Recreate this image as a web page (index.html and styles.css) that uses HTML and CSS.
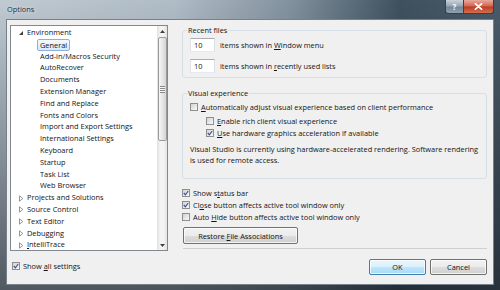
FILE: index.html
```html
<!DOCTYPE html>
<html>
<head>
<meta charset="utf-8">
<title>Options</title>
<link rel="stylesheet" href="styles.css">
</head>
<body>
<div class="window">
  <div class="titlebar">
    <span class="title">Options</span>
    <div class="caption">
      <span class="cap-btn help">?</span>
      <span class="cap-btn close"><svg width="9" height="7" viewBox="0 0 9 7"><path d="M1.5 0.8 L7.5 6.2 M7.5 0.8 L1.5 6.2" stroke="#fff" stroke-width="1.8" stroke-linecap="round"/></svg></span>
    </div>
  </div>
  <div class="client">
    <div class="left">
      <div class="tree">
        <ul class="tree-list">
          <li class="node"><svg class="arrow" width="6" height="6" viewBox="0 0 6 6"><polygon points="5,1 5,5 1,5" fill="#404040"/></svg>Environment</li>
          <li class="child"><span class="sel">General</span></li>
          <li class="child"><span class="item">Add-in/Macros Security</span></li>
          <li class="child"><span class="item">AutoRecover</span></li>
          <li class="child"><span class="item">Documents</span></li>
          <li class="child"><span class="item">Extension Manager</span></li>
          <li class="child"><span class="item">Find and Replace</span></li>
          <li class="child"><span class="item">Fonts and Colors</span></li>
          <li class="child"><span class="item">Import and Export Settings</span></li>
          <li class="child"><span class="item">International Settings</span></li>
          <li class="child"><span class="item">Keyboard</span></li>
          <li class="child"><span class="item">Startup</span></li>
          <li class="child"><span class="item">Task List</span></li>
          <li class="child"><span class="item">Web Browser</span></li>
          <li class="node"><svg class="arrow" width="6" height="7" viewBox="0 0 6 7"><polygon points="1.5,0.8 4.8,3.5 1.5,6.2" fill="none" stroke="#8a8a8a" stroke-width="0.9"/></svg>Projects and Solutions</li>
          <li class="node"><svg class="arrow" width="6" height="7" viewBox="0 0 6 7"><polygon points="1.5,0.8 4.8,3.5 1.5,6.2" fill="none" stroke="#8a8a8a" stroke-width="0.9"/></svg>Source Control</li>
          <li class="node"><svg class="arrow" width="6" height="7" viewBox="0 0 6 7"><polygon points="1.5,0.8 4.8,3.5 1.5,6.2" fill="none" stroke="#8a8a8a" stroke-width="0.9"/></svg>Text Editor</li>
          <li class="node"><svg class="arrow" width="6" height="7" viewBox="0 0 6 7"><polygon points="1.5,0.8 4.8,3.5 1.5,6.2" fill="none" stroke="#8a8a8a" stroke-width="0.9"/></svg>Debugging</li>
          <li class="node"><svg class="arrow" width="6" height="7" viewBox="0 0 6 7"><polygon points="1.5,0.8 4.8,3.5 1.5,6.2" fill="none" stroke="#8a8a8a" stroke-width="0.9"/></svg><u>I</u>ntelliTrace</li>
        </ul>
        <div class="vscroll">
          <div class="sb-btn"><svg width="5" height="3" viewBox="0 0 5 3"><polygon points="0,3 2.5,0 5,3" fill="#404040"/></svg></div>
          <div class="sb-track"><div class="thumb"><span class="grip"></span></div></div>
          <div class="sb-btn"><svg width="5" height="3" viewBox="0 0 5 3"><polygon points="0,0 5,0 2.5,3" fill="#404040"/></svg></div>
        </div>
      </div>
      <div class="chk show-all"><span class="cb"><svg viewBox="0 0 6 6"><path d="M0.8 3 L2.4 4.8 L5.2 1" fill="none" stroke="#3d5593" stroke-width="1.2"/></svg></span><span>Show <u>a</u>ll settings</span></div>
    </div>
    <div class="right">
      <fieldset class="group recent">
        <legend>Recent files</legend>
        <div class="num-row"><span class="textbox">10</span><span>items shown in <u>W</u>indow menu</span></div>
        <div class="num-row second"><span class="textbox">10</span><span>items shown in <u>r</u>ecently used lists</span></div>
      </fieldset>
      <fieldset class="group visual">
        <legend>Visual experience</legend>
        <div class="chk first"><span class="cb"></span><span><u>A</u>utomatically adjust visual experience based on client performance</span></div>
        <div class="chk nested"><span class="cb"></span><span><u>E</u>nable rich client visual experience</span></div>
        <div class="chk nested"><span class="cb"><svg viewBox="0 0 6 6"><path d="M0.8 3 L2.4 4.8 L5.2 1" fill="none" stroke="#3d5593" stroke-width="1.2"/></svg></span><span><u>U</u>se hardware graphics acceleration if available</span></div>
        <p class="note">Visual Studio is currently using hardware-accelerated rendering. Software rendering<br>is used for remote access.</p>
      </fieldset>
      <div class="options">
        <div class="chk"><span class="cb"><svg viewBox="0 0 6 6"><path d="M0.8 3 L2.4 4.8 L5.2 1" fill="none" stroke="#3d5593" stroke-width="1.2"/></svg></span><span>Show s<u>t</u>atus bar</span></div>
        <div class="chk"><span class="cb"><svg viewBox="0 0 6 6"><path d="M0.8 3 L2.4 4.8 L5.2 1" fill="none" stroke="#3d5593" stroke-width="1.2"/></svg></span><span>Cl<u>o</u>se button affects active tool window only</span></div>
        <div class="chk"><span class="cb"></span><span>Auto <u>H</u>ide button affects active tool window only</span></div>
      </div>
      <button class="btn restore">Restore <u>F</u>ile Associations</button>
      <div class="separator"></div>
      <div class="dialog-btns">
        <button class="btn default">OK</button>
        <button class="btn">Cancel</button>
      </div>
    </div>
  </div>
</div>
</body>
</html>
```

FILE: styles.css
```css
* { box-sizing: border-box; }
html, body { margin: 0; padding: 0; }
body {
  width: 500px;
  height: 290px;
  overflow: hidden;
  font-family: "Open Sans", "Noto Sans", sans-serif;
  font-size: 7.4px;
  color: #141414;
}
u { text-decoration-thickness: 0.6px; text-underline-offset: 1px; }

.window {
  width: 500px;
  height: 290px;
  display: flex;
  flex-direction: column;
  background:
    linear-gradient(to bottom, rgba(20,28,36,0) 0%, rgba(20,28,36,0.35) 55%, rgba(20,28,36,0.65) 100%),
    linear-gradient(to right, #c0cad2 0%, #b0bcc6 35%, #82929f 58%, #3f505e 80%, #4a5a68 100%);
}

.titlebar {
  height: 19px;
  display: flex;
  align-items: flex-start;
  padding: 0 6px 0 7px;
}
.title {
  line-height: 19px;
  color: #2b3036;
  text-shadow: 0 0 4px rgba(255,255,255,0.8);
}
.caption { margin-left: auto; display: flex; }
.cap-btn {
  height: 14px;
  display: flex;
  align-items: center;
  justify-content: center;
  border: 1px solid #34414c;
  border-top: none;
}
.help {
  width: 18px;
  border-right: none;
  border-radius: 0 0 0 3px;
  background: linear-gradient(#c9d2da 0%, #95a4b1 48%, #74879a 52%, #8ea0b0 100%);
  color: #fff;
  font-weight: bold;
  font-size: 8px;
  line-height: 1;
}
.close {
  width: 31px;
  border-radius: 0 0 3px 0;
  background: linear-gradient(#e9a99b 0%, #d26450 48%, #bd3a22 52%, #d3704f 100%);
}

.client {
  flex: 1;
  margin: 0 6px 5px 6px;
  background: #f0f0f0;
  border: 1px solid #75818b;
  display: flex;
  gap: 14px;
  padding: 5px 6px 0 3px;
}

/* ---- left: tree ---- */
.left { width: 158px; display: flex; flex-direction: column; }
.tree {
  height: 226px;
  border: 1px solid #828790;
  background: #fff;
  display: flex;
}
.tree-list {
  flex: 1;
  list-style: none;
  margin: 0;
  padding: 1px 0 0 0;
  overflow: hidden;
  min-width: 0;
}
.tree-list li {
  height: 11.8px;
  line-height: 11.8px;
  white-space: nowrap;
  display: flex;
  align-items: center;
}
.node { padding-left: 7px; }
.arrow { margin-right: 3px; flex: none; }
.child { padding-left: 26px; }
.item { padding: 0 3px; }
.sel {
  padding: 0 2px;
  line-height: 10px;
  border: 1px solid #8cb0dc;
  border-radius: 2px;
  background: linear-gradient(#f4f9fe, #dae9fb);
}

.vscroll {
  width: 10px;
  display: flex;
  flex-direction: column;
  background: linear-gradient(to right, #e2e2e2, #f3f3f3 35%, #f3f3f3 65%, #e2e2e2);
}
.sb-btn { height: 10px; display: flex; align-items: center; justify-content: center; flex: none; }
.sb-track { flex: 1; padding-top: 1px; }
.thumb {
  height: 104px;
  margin: 0 0.5px;
  border: 1px solid #9a9a9a;
  border-radius: 2px;
  background: linear-gradient(to right, #f6f6f6, #e6e6e6 50%, #d6d6d6);
  display: flex;
  align-items: center;
  justify-content: center;
}
.grip {
  width: 5px;
  height: 7px;
  background: repeating-linear-gradient(to bottom, #8a8a8a 0 1px, #f5f5f5 1px 2px);
}

/* ---- checkboxes ---- */
.chk {
  display: flex;
  align-items: center;
  height: 12px;
  gap: 3px;
  white-space: nowrap;
}
.cb {
  width: 8px;
  height: 8px;
  flex: none;
  border: 1px solid #8e8f8f;
  background: linear-gradient(135deg, #d2d2d2, #fafafa);
  display: flex;
  align-items: center;
  justify-content: center;
}
.cb svg { width: 6px; height: 6px; }
.show-all { margin-top: 9px; padding-left: 2px; }

/* ---- right ---- */
.right { width: 305px; display: flex; flex-direction: column; }
.group {
  margin: 0;
  border: 1px solid #d5dfe5;
  border-radius: 3px;
  padding: 3px 6px 4px 7px;
  min-width: 0;
}
.group legend {
  padding: 0 1px;
  margin-left: -3px;
  line-height: 10px;
}
.num-row { display: flex; align-items: center; gap: 5px; }
.num-row.second { margin-top: 7px; }
.textbox {
  width: 25px;
  height: 14px;
  line-height: 12px;
  padding-left: 3px;
  background: #fff;
  border: 1px solid;
  border-color: #abadb3 #dbdfe6 #e3e9ef #e2e3ea;
}
.visual { margin-top: 10px; padding-bottom: 12px; }
.visual .first { margin-bottom: 2px; }
.nested { margin-left: 16px; }
.note { margin: 5px 0 0 0; line-height: 11px; white-space: nowrap; }

.options { margin-top: 8px; }

.btn {
  font: inherit;
  color: inherit;
  padding: 0;
  border: 1px solid #707070;
  border-radius: 2px;
  background: linear-gradient(#f2f2f2 0%, #ebebeb 50%, #dddddd 51%, #cfcfcf 100%);
  box-shadow: inset 0 0 0 1px rgba(255,255,255,0.75);
}
.restore {
  align-self: flex-start;
  width: 115px;
  height: 17px;
  margin: 4px 0 0 1px;
}
.separator { height: 1px; margin: 4px 0 0 1px; background: #d0d0d0; }
.dialog-btns { display: flex; justify-content: flex-end; gap: 4px; margin-top: 10px; }
.dialog-btns .btn { width: 57px; height: 16px; }
.default {
  border-color: #3c7fb1;
  background: linear-gradient(#eaf6fd 0%, #d9f0fc 50%, #bee6fd 51%, #a7d9f5 100%);
}
```
